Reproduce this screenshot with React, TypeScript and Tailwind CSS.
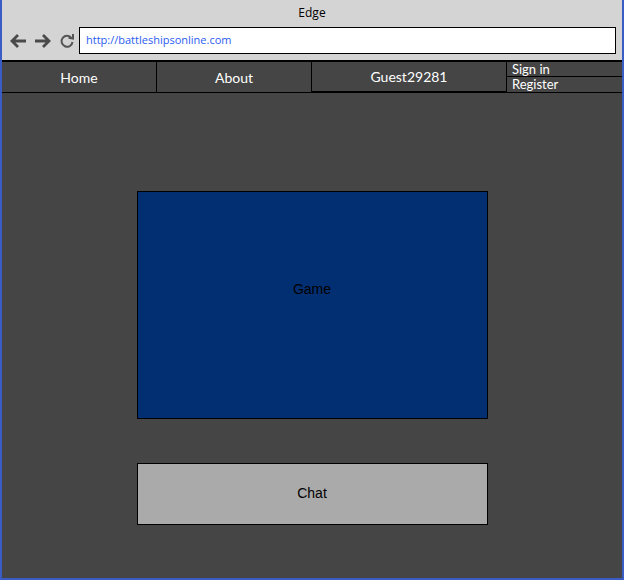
import React from "react";

const navFont = { fontFamily: "Lato, 'Open Sans', sans-serif" };

export default function App() {
  return (
    <div className="w-[627px] h-[582px] bg-white">
      <div className="w-[624px] h-[580px] border-l-2 border-r-2 border-b-2 border-[#3b5cc4] flex flex-col bg-[#454545]">
        {/* header */}
        <div className="h-[60px] bg-[#d4d4d4] flex flex-col">
          <div
            className="h-[26px] flex items-center justify-center text-[12px] text-black"
            style={{ fontFamily: "'Open Sans', 'Noto Sans', sans-serif" }}
          >
            Edge
          </div>
          <div className="flex items-start h-[34px]">
            <div className="flex items-center gap-[4px] pl-[7px] pt-[1px] h-[27px] mt-[1px]">
              <svg width="20" height="18" viewBox="0 0 20 18">
                <path d="M17 9 H3 M9 3 L3 9 L9 15" fill="none" stroke="#4a4a4a" strokeWidth="2.8" strokeLinecap="butt" />
              </svg>
              <svg width="20" height="18" viewBox="0 0 20 18">
                <path d="M2 9 H16 M10 3 L16 9 L10 15" fill="none" stroke="#4a4a4a" strokeWidth="2.8" strokeLinecap="butt" />
              </svg>
              <svg width="16" height="16" viewBox="0 0 16 16" className="ml-[2px]">
                <path d="M12.5 5 A5.5 5.5 0 1 0 13.5 9" fill="none" stroke="#555" strokeWidth="2" />
                <path d="M9.5 4.8 L14 5.5 L14 1" fill="none" stroke="#555" strokeWidth="2" />
              </svg>
            </div>
            <div className="ml-[4px] mt-[1px] w-[537px] h-[27px] bg-white border border-black flex items-center pl-[6px]">
              <span className="text-[11px] text-[#2a5cf0]" style={{ fontFamily: "'Open Sans', 'Noto Sans', sans-serif" }}>
                http://battleshipsonline.com
              </span>
            </div>
          </div>
        </div>
        {/* nav bar */}
        <div className="h-[33px] border-t-2 border-black flex text-white text-[14px]" style={navFont}>
          <div className="w-[155px] border-r border-b border-black flex items-center justify-center">Home</div>
          <div className="w-[155px] border-r border-b border-black flex items-center justify-center">About</div>
          <div className="w-[195px] border-r border-b-2 border-black flex items-center justify-center">Guest29281</div>
          <div className="flex-1 flex flex-col text-[13px]">
            <div className="h-[15px] border-b border-black pl-[5px] leading-[14px]">Sign in</div>
            <div className="h-[16px] border-b border-black pl-[5px] leading-[15px]">Register</div>
          </div>
        </div>
        {/* main */}
        <div className="flex-1 flex flex-col items-center pt-[98px]" style={{ fontFamily: "'Liberation Sans', Arial, sans-serif" }}>
          <div className="w-[351px] h-[228px] bg-[#022f72] border border-black flex justify-center pt-[89px] text-[14px] text-black">
            <span className="h-[16px] leading-[16px]">Game</span>
          </div>
          <div className="mt-[44px] w-[351px] h-[62px] bg-[#aaaaaa] border border-black flex justify-center pt-[21px] text-[14px] text-black">
            <span className="h-[16px] leading-[16px]">Chat</span>
          </div>
        </div>
      </div>
    </div>
  );
}
